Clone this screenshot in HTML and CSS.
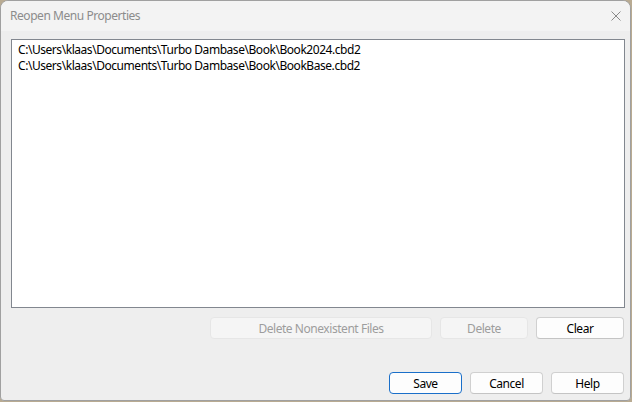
FILE: index.html
```html
<!DOCTYPE html>
<html lang="en">
<head>
    <meta charset="UTF-8">
    <title>Reopen Menu Properties</title>
    <link rel="stylesheet" href="styles.css">
</head>
<body>
    <div class="window">
        <div class="titlebar">
            <span class="title">Reopen Menu Properties</span>
            <button class="close" title="Close">
                <svg width="10" height="10" viewBox="0 0 10 10">
                    <path d="M0.5 0.5 L9.5 9.5 M9.5 0.5 L0.5 9.5" stroke="#8a8a8a" stroke-width="1" fill="none"/>
                </svg>
            </button>
        </div>
        <div class="client">
            <div class="listbox">
                <div class="item">C:\Users\klaas\Documents\Turbo Dambase\Book\Book2024.cbd2</div>
                <div class="item">C:\Users\klaas\Documents\Turbo Dambase\Book\BookBase.cbd2</div>
            </div>
            <div class="row row-list">
                <button class="btn wide" disabled>Delete Nonexistent Files</button>
                <button class="btn mid" disabled>Delete</button>
                <button class="btn mid">Clear</button>
            </div>
            <div class="row row-dialog">
                <button class="btn small default">Save</button>
                <button class="btn small">Cancel</button>
                <button class="btn small">Help</button>
            </div>
        </div>
    </div>
</body>
</html>
```

FILE: styles.css
```css
* {
    box-sizing: border-box;
    margin: 0;
    padding: 0;
}

body {
    width: 632px;
    height: 402px;
    overflow: hidden;
    background-color: #b9ab92;
    font-family: "Noto Sans", "Open Sans", sans-serif;
    font-size: 12px;
    letter-spacing: -0.45px;
}

.window {
    width: 631px;
    height: 401px;
    border: 1px solid #a0a0a0;
    border-radius: 8px 8px 4px 4px;
    background-color: #eeeeee;
    overflow: hidden;
    display: flex;
    flex-direction: column;
}

.titlebar {
    height: 30px;
    background-color: #f3f3f3;
    display: flex;
    align-items: center;
    justify-content: space-between;
    padding-left: 9px;
}

.title {
    color: #8c8c8c;
    font-size: 12px;
    padding-bottom: 1px;
}

.close {
    background: none;
    border: none;
    width: 28px;
    height: 30px;
    display: flex;
    align-items: center;
    justify-content: center;
    padding-bottom: 1px;
}

.client {
    flex: 1;
    padding: 8px 5px 0 10px;
    display: flex;
    flex-direction: column;
}

.listbox {
    height: 269px;
    background-color: #ffffff;
    border: 1px solid #82878f;
    padding: 2px 6px;
    color: #000000;
}

.item {
    height: 16px;
    line-height: 16px;
    white-space: nowrap;
}

.row {
    display: flex;
    justify-content: flex-end;
    gap: 8px;
    padding-right: 1px;
}

.row-list {
    margin-top: 9px;
}

.row-dialog {
    margin-top: 33px;
}

.btn {
    height: 22px;
    font-family: inherit;
    font-size: 12px;
    letter-spacing: inherit;
    color: #000000;
    background-color: #fdfdfd;
    border: 1px solid #d0d0d0;
    border-bottom-color: #c4c4c4;
    border-radius: 4px;
}

.btn:disabled {
    color: #9d9d9d;
    background-color: #f5f5f5;
    border-color: #e6e6e6;
}

.btn.default {
    border-color: #1a6fc9;
}

.wide {
    width: 222px;
}

.mid {
    width: 88px;
}

.small {
    width: 73px;
}
```
